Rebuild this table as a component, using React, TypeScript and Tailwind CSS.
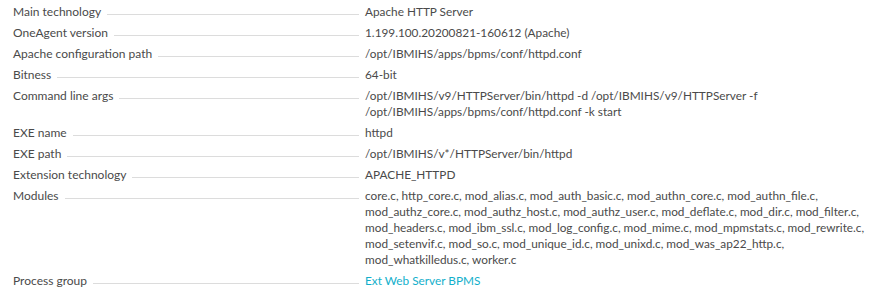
const rows: { label: string; value: string; link?: boolean }[] = [
  { label: 'Main technology', value: 'Apache HTTP Server' },
  { label: 'OneAgent version', value: '1.199.100.20200821-160612 (Apache)' },
  { label: 'Apache configuration path', value: '/opt/IBMIHS/apps/bpms/conf/httpd.conf' },
  { label: 'Bitness', value: '64-bit' },
  {
    label: 'Command line args',
    value:
      '/opt/IBMIHS/v9/HTTPServer/bin/httpd -d /opt/IBMIHS/v9/HTTPServer -f /opt/IBMIHS/apps/bpms/conf/httpd.conf -k start',
  },
  { label: 'EXE name', value: 'httpd' },
  { label: 'EXE path', value: '/opt/IBMIHS/v*/HTTPServer/bin/httpd' },
  { label: 'Extension technology', value: 'APACHE_HTTPD' },
  {
    label: 'Modules',
    value:
      'core.c, http_core.c, mod_alias.c, mod_auth_basic.c, mod_authn_core.c, mod_authn_file.c, mod_authz_core.c, mod_authz_host.c, mod_authz_user.c, mod_deflate.c, mod_dir.c, mod_filter.c, mod_headers.c, mod_ibm_ssl.c, mod_log_config.c, mod_mime.c, mod_mpmstats.c, mod_rewrite.c, mod_setenvif.c, mod_so.c, mod_unique_id.c, mod_unixd.c, mod_was_ap22_http.c, mod_whatkilledus.c, worker.c',
  },
  { label: 'Process group', value: 'Ext Web Server BPMS', link: true },
];

const App = () => {
  return (
    <div className="w-[886px] h-[297px] bg-white font-['Lato',sans-serif] text-[12px] leading-4 text-[#4a4a4a]">
      <div className="grid grid-cols-[346px_1fr] gap-x-[6px] gap-y-[5px] pl-[13px] pr-[13px] pt-[4px]">
        {rows.map((row) => (
          <div key={row.label} className="contents">
            <div className="flex items-start">
              <span className="whitespace-nowrap">{row.label}</span>
              <div className="flex-1 ml-[6px] h-[11px] border-b border-[#dcdcdc]"></div>
            </div>
            <div className={row.link ? 'text-[11.8px] text-[#12afcb]' : 'text-[11.8px]'}>{row.value}</div>
          </div>
        ))}
      </div>
    </div>
  );
};

export default App;
